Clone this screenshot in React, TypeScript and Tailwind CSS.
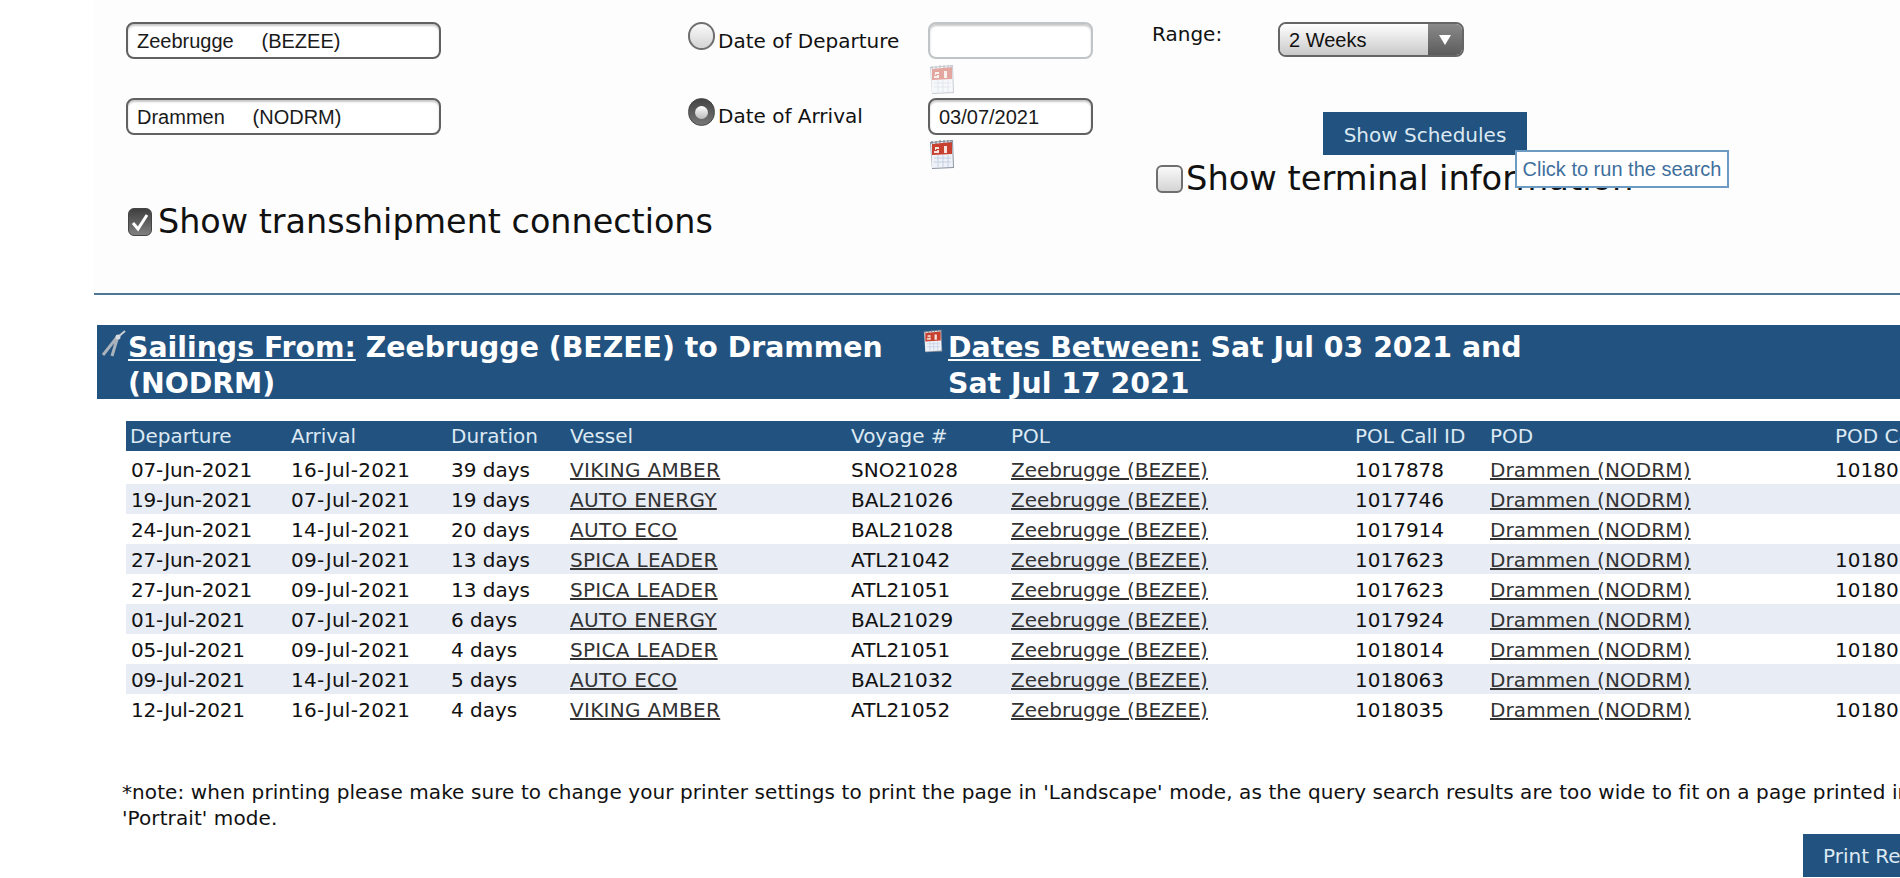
const rows = [
  ['07-Jun-2021', '16-Jul-2021', '39 days', 'VIKING AMBER', 'SNO21028', '1017878', '1018012'],
  ['19-Jun-2021', '07-Jul-2021', '19 days', 'AUTO ENERGY', 'BAL21026', '1017746', ''],
  ['24-Jun-2021', '14-Jul-2021', '20 days', 'AUTO ECO', 'BAL21028', '1017914', ''],
  ['27-Jun-2021', '09-Jul-2021', '13 days', 'SPICA LEADER', 'ATL21042', '1017623', '1018012'],
  ['27-Jun-2021', '09-Jul-2021', '13 days', 'SPICA LEADER', 'ATL21051', '1017623', '1018012'],
  ['01-Jul-2021', '07-Jul-2021', '6 days', 'AUTO ENERGY', 'BAL21029', '1017924', ''],
  ['05-Jul-2021', '09-Jul-2021', '4 days', 'SPICA LEADER', 'ATL21051', '1018014', '1018012'],
  ['09-Jul-2021', '14-Jul-2021', '5 days', 'AUTO ECO', 'BAL21032', '1018063', ''],
  ['12-Jul-2021', '16-Jul-2021', '4 days', 'VIKING AMBER', 'ATL21052', '1018035', '1018012'],
];

const headers = ['Departure', 'Arrival', 'Duration', 'Vessel', 'Voyage #', 'POL', 'POL Call ID', 'POD', 'POD Call ID'];

function CalendarIcon({ faded = false }: { faded?: boolean }) {
  return (
    <svg width="26" height="31" viewBox="0 0 26 31" className={faded ? 'opacity-45' : ''}>
      <path d="M1 3 L24 1 L25 29 L3 30 Z" fill="#8b93a0" />
      <path d="M2 4 L23 2 L24 28 L3 29 Z" fill="#eef2f8" />
      <path d="M3 5 L23 3 L23 15 L3 16 Z" fill="#c8402f" />
      <path d="M6 8 h4 v2 h-3 v1 h3 v3 h-5 v-2 h3 v-1 h-2 Z M15 7 h3 v7 h-3 Z" fill="#f5e3dc" />
      <path d="M5 19 H22 M5 23 H22 M9 16 V28 M14 16 V28 M19 16 V28" stroke="#c5d0e2" strokeWidth="1" />
      <path d="M3 2 V5 M7 2 V5 M11 1 V4 M15 1 V4 M19 1 V4 M22 1 V4" stroke="#6f7682" strokeWidth="1" />
    </svg>
  );
}

function CompassIcon() {
  return (
    <svg width="26" height="28" viewBox="0 0 26 28">
      <path d="M24 1 L17 7" stroke="#c9ced4" strokeWidth="2" />
      <path d="M17 6 L2 25 M17 6 L11 26" stroke="#aab2bb" strokeWidth="3" />
      <circle cx="17" cy="7" r="2.5" fill="#d7dbe0" />
    </svg>
  );
}

function TextBox({ value, width, faded = false }: { value: string; width: string; faded?: boolean }) {
  return (
    <div
      className={`${width} h-[37px] rounded-lg border-2 bg-white pl-[9px] flex items-center text-[20px] shadow-[inset_0_2px_2px_rgba(0,0,0,0.22)] whitespace-pre text-[#1a1a1a] font-['Liberation_Sans',sans-serif] ${
        faded ? 'border-[#c0c4c6]' : 'border-[#616161]'
      }`}
    >
      {value}
    </div>
  );
}

function Radio({ checked = false }: { checked?: boolean }) {
  return checked ? (
    <div className="w-[27px] h-[28px] rounded-full bg-gradient-to-b from-[#444] to-[#777] flex items-center justify-center border border-[#444]">
      <div className="w-[13px] h-[13px] rounded-full bg-gradient-to-b from-white to-[#bbb]" />
    </div>
  ) : (
    <div className="w-[27px] h-[28px] rounded-full bg-gradient-to-b from-[#fafafa] to-[#d4d4d4] border-2 border-[#6f6f6f]" />
  );
}

function CheckBox({ checked = false }: { checked?: boolean }) {
  return checked ? (
    <div className="w-[27px] h-[28px] rounded-md bg-gradient-to-b from-[#3f3f3f] to-[#808080] border border-[#444] flex items-center justify-center">
      <svg width="22" height="22" viewBox="0 0 22 22">
        <path d="M4 12 L9 18 L18 4" fill="none" stroke="#fff" strokeWidth="3" />
      </svg>
    </div>
  ) : (
    <div className="w-[27px] h-[28px] rounded-md bg-gradient-to-b from-[#fafafa] to-[#d4d4d4] border-2 border-[#6f6f6f]" />
  );
}

export default function App() {
  return (
    <div className="w-[1900px] h-[878px] overflow-hidden bg-white text-[#111] font-['DejaVu_Sans',sans-serif]">
      {/* Search form */}
      <div className="ml-[94px] h-[293px] bg-[#fdfdfd] pt-[22px] flex">
        <div className="w-[594px] pl-[32px]">
          <TextBox value="Zeebrugge     (BEZEE)" width="w-[315px]" />
          <div className="mt-[39px]">
            <TextBox value="Drammen     (NODRM)" width="w-[315px]" />
          </div>
          <label className="mt-[73px] ml-[2px] flex items-center gap-[6px] text-[33.4px] leading-[28px] whitespace-nowrap">
            <CheckBox checked />
            Show transshipment connections
          </label>
        </div>

        <div className="w-[240px]">
          <div className="flex items-start gap-[3px] text-[20px] h-[76px]">
            <Radio />
            <span className="mt-[4px]">Date of Departure</span>
          </div>
          <div className="flex items-start gap-[3px] text-[20px]">
            <Radio checked />
            <span className="mt-[3px]">Date of Arrival</span>
          </div>
        </div>

        <div className="w-[224px]">
          <TextBox value="" width="w-[165px]" faded />
          <div className="ml-[1px] mt-[5px] h-[34px]">
            <CalendarIcon faded />
          </div>
          <TextBox value="03/07/2021" width="w-[165px]" />
          <div className="ml-[1px] mt-[4px]">
            <CalendarIcon />
          </div>
        </div>

        <div className="relative">
          <div className="flex items-start">
            <span className="w-[126px] text-[20px] leading-[24px]">Range:</span>
            <div className="w-[186px] h-[35px] rounded-lg border-2 border-[#666] flex overflow-hidden text-[20px] font-['Liberation_Sans',sans-serif]">
              <div className="flex-1 pl-[9px] flex items-center bg-gradient-to-b from-white to-[#c9c9c9]">2 Weeks</div>
              <div className="w-[34px] flex items-center justify-center bg-gradient-to-b from-[#8a8a8a] to-[#5c5c5c]">
                <div className="w-0 h-0 border-l-[6px] border-r-[6px] border-t-[10px] border-l-transparent border-r-transparent border-t-white" />
              </div>
            </div>
          </div>
          <div className="mt-[55px] ml-[171px] w-[204px] h-[43px] pt-[2px] bg-[#22527f] text-[#dce9f3] text-[20px] flex items-center justify-center">
            Show Schedules
          </div>
          <label className="mt-[10px] ml-[4px] flex items-center gap-[3px] text-[33.7px] leading-[28px] whitespace-nowrap">
            <CheckBox />
            Show terminal information
          </label>
          <div className="absolute left-[363px] top-[128px] w-[214px] h-[38px] bg-white border-2 border-[#6d9bc4] text-[#3f6f9c] text-[20px] flex items-center justify-center whitespace-nowrap font-['Liberation_Sans',sans-serif]">
            Click to run the search
          </div>
        </div>
      </div>
      <div className="ml-[94px] h-[2px] bg-[#4f7896]" />

      {/* Summary bar */}
      <div className="ml-[97px] mt-[30px] h-[74px] pt-[1px] bg-[#22527f] text-white font-bold text-[28.35px] leading-[36px] flex">
        <div className="w-[826px] flex">
          <div className="w-[31px] pl-[4px] pt-[4px]">
            <CompassIcon />
          </div>
          <div className="w-[780px] pt-[4px]">
            <span className="underline">Sailings From:</span> Zeebrugge (BEZEE) to Drammen (NODRM)
          </div>
        </div>
        <div className="flex">
          <div className="w-[25px] pt-[3px] [&_svg]:w-[20px] [&_svg]:h-[24px]">
            <CalendarIcon />
          </div>
          <div className="w-[620px] pt-[4px]">
            <span className="underline">Dates Between:</span> Sat Jul 03 2021 and Sat Jul 17 2021
          </div>
        </div>
      </div>

      {/* Results */}
      <table className="ml-[126px] mt-[22px] w-[1900px] table-fixed border-collapse text-[20px] leading-[30px]">
        <colgroup>
          <col className="w-[160px]" />
          <col className="w-[160px]" />
          <col className="w-[119px]" />
          <col className="w-[281px]" />
          <col className="w-[160px]" />
          <col className="w-[344px]" />
          <col className="w-[135px]" />
          <col className="w-[345px]" />
          <col className="w-[196px]" />
        </colgroup>
        <thead>
          <tr className="bg-[#22527f] text-[#dce9f3]">
            {headers.map(h => (
              <th key={h} className="pt-[1px] leading-[29px] pl-[5px] first:pl-[4px] text-left font-normal whitespace-nowrap">{h}</th>
            ))}
          </tr>
          <tr className="h-[3px]" />
        </thead>
        <tbody className="leading-[28px] [&_td]:pt-[2px]">
          {rows.map((r, i) => (
            <tr key={i} className={i % 2 === 1 ? 'bg-[#e8ecf4]' : 'bg-white'}>
              <td className="pl-[5px] tracking-[-0.2px]">{r[0]}</td>
              <td className="pl-[5px] tracking-[0.3px]">{r[1]}</td>
              <td className="pl-[5px]">{r[2]}</td>
              <td className="pl-[5px] underline text-[#333] tracking-[0.3px]">{r[3]}</td>
              <td className="pl-[5px]">{r[4]}</td>
              <td className="pl-[5px] underline text-[#333]">Zeebrugge (BEZEE)</td>
              <td className="pl-[5px]">{r[5]}</td>
              <td className="pl-[5px] underline text-[#333] tracking-[0.1px]">Drammen (NODRM)</td>
              <td className="pl-[5px]">{r[6]}</td>
            </tr>
          ))}
        </tbody>
      </table>

      {/* Footer note */}
      <p className="ml-[122px] mt-[55px] w-[1778px] text-[20px] leading-[26px] whitespace-nowrap tracking-[0.09px]">
        *note: when printing please make sure to change your printer settings to print the page in 'Landscape' mode, as the query search results are too wide to fit on a page printed in
        <br />
        'Portrait' mode.
      </p>
      <div className="ml-[1803px] mt-[3px] w-[204px] h-[43px] pt-[1px] bg-[#22527f] text-[#dce9f3] text-[20px] flex items-center pl-[20px] whitespace-nowrap">
        Print Results
      </div>
    </div>
  );
}
